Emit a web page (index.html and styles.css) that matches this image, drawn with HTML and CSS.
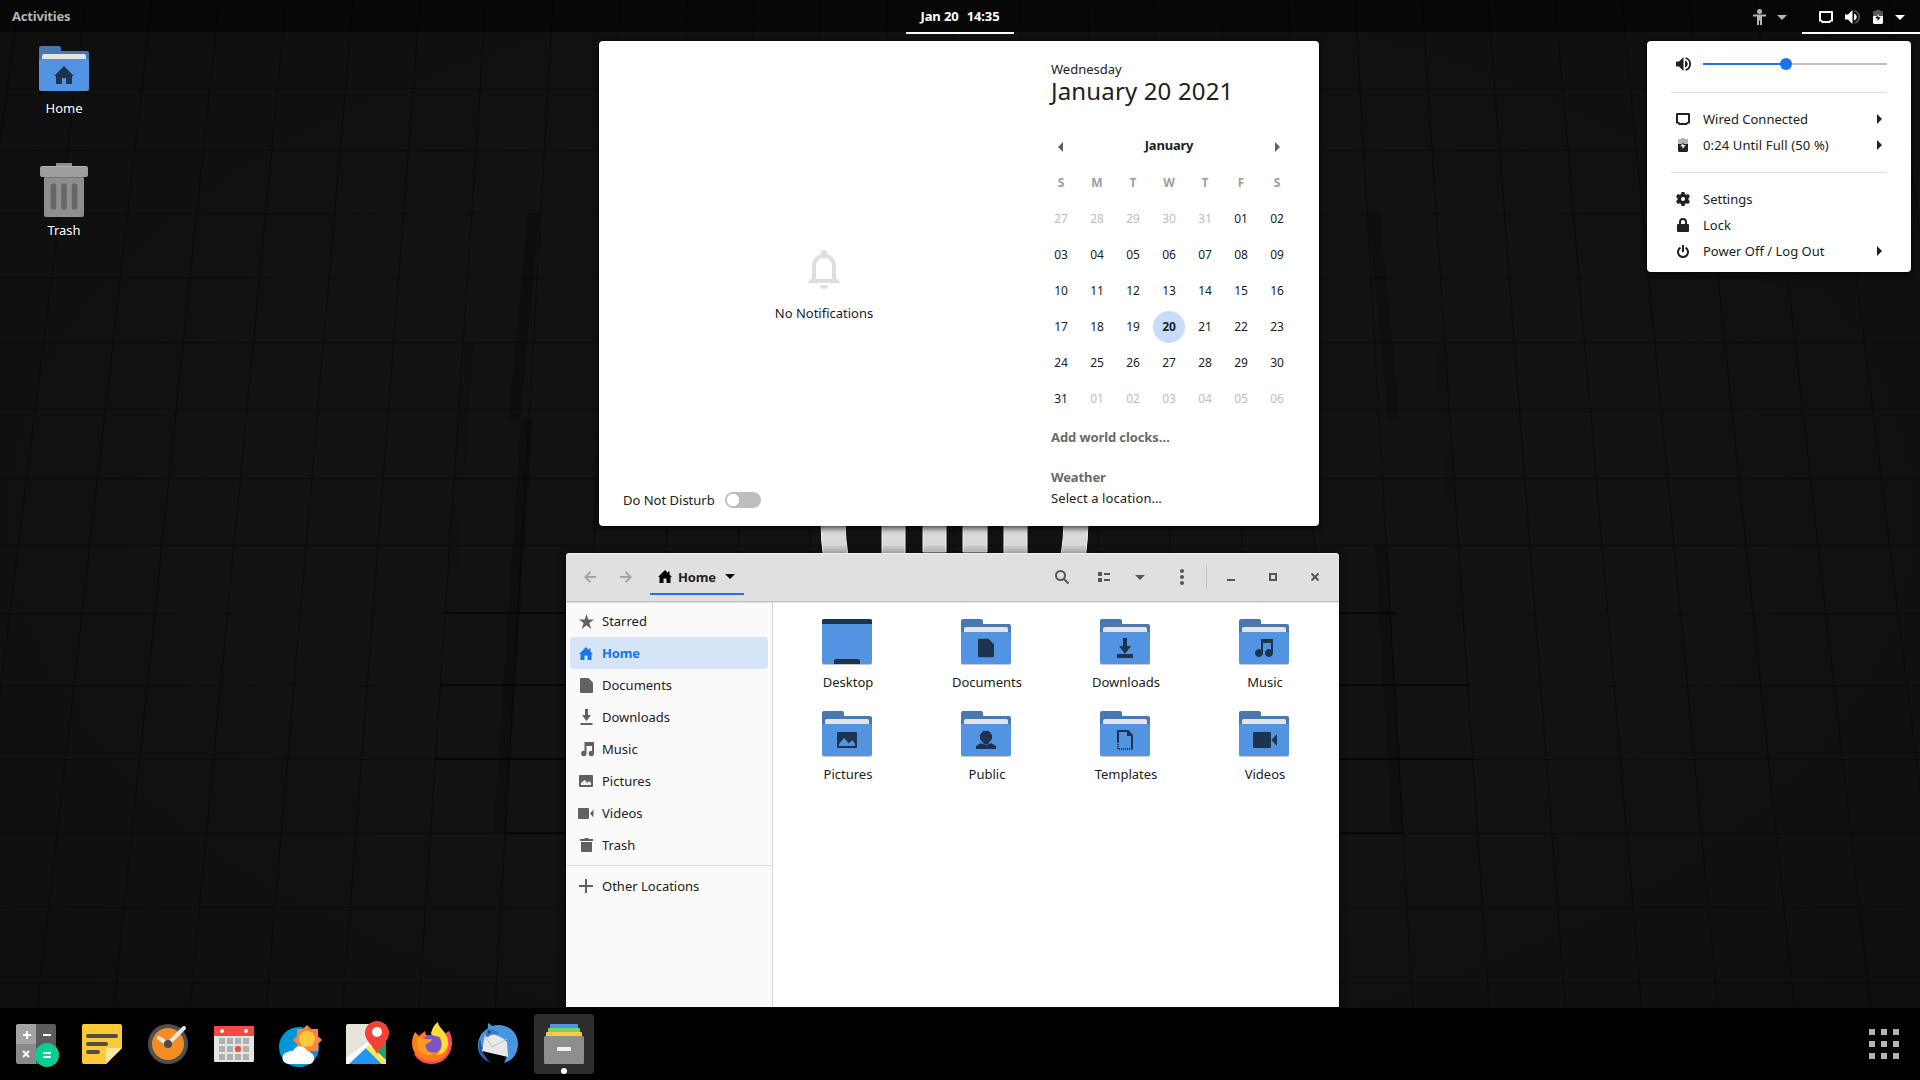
FILE: index.html
```html
<!DOCTYPE html>
<html lang="en">
<head>
<meta charset="utf-8">
<title>Desktop</title>
<link rel="stylesheet" href="styles.css">
</head>
<body>
<svg class="defs" width="0" height="0">
  <symbol id="folder" viewBox="0 0 50 46">
    <path d="M0 4a2 2 0 0 1 2-2h46a2 2 0 0 1 2 2v40a2 2 0 0 1-2 2H2a2 2 0 0 1-2-2z" fill="#000" opacity=".2" transform="translate(0 11) scale(1 .76)"/>
    <path d="M0 2a2 2 0 0 1 2-2h18a2 2 0 0 1 2 2v3h26a2 2 0 0 1 2 2v20H0z" fill="#4877b1"/>
    <path d="M3 10a2 2 0 0 1 2-2h40a2 2 0 0 1 2 2v8H3z" fill="#e4e4e4"/>
    <path d="M0 15a2 2 0 0 1 2-2h46a2 2 0 0 1 2 2v28a2 2 0 0 1-2 2H2a2 2 0 0 1-2-2z" fill="#5294e2"/>
  </symbol>
  <symbol id="house" viewBox="0 0 14 13"><path d="M7 0 0 7h1.500v6H5.500V8.500h3V13h4V7H14L11.500 4.500V1.500h-1.500v1.500z" /></symbol>
  <symbol id="house-plain" viewBox="0 0 20 18"><path d="M10 0 0 10h2v8h6v-6h4v6h6v-8h2z"/></symbol>
  <symbol id="doc" viewBox="0 0 13 15"><path d="M1 0h7.500L13 4.500V14a1 1 0 0 1-1 1H1a1 1 0 0 1-1-1V1a1 1 0 0 1 1-1z"/></symbol>
  <symbol id="down" viewBox="0 0 13 16"><path d="M5 0h3v6h3l-4.500 6L2 6h3zM.500 14h12v2H.500z"/></symbol>
  <symbol id="note" viewBox="0 0 15 15"><path d="M5.500 0H15v11.500a2.700 2.700 0 1 1-2-2.600V4H7.500v7.800A2.700 2.700 0 1 1 5.500 9z"/></symbol>
  <symbol id="pic" viewBox="0 0 20 16"><path fill-rule="evenodd" d="M1 0h18a1 1 0 0 1 1 1v14a1 1 0 0 1-1 1H1a1 1 0 0 1-1-1V1a1 1 0 0 1 1-1zM2 14h16v-2.500L15 8l-3 3.500L7 6l-5 6z"/></symbol>
  <symbol id="cam" viewBox="0 0 16 11"><path d="M1 0h9a1 1 0 0 1 1 1v9a1 1 0 0 1-1 1H1a1 1 0 0 1-1-1V1a1 1 0 0 1 1-1zM12 5.500l3.500-4v8z"/></symbol>
  <symbol id="caret" viewBox="0 0 10 5"><path d="M0 0h10L5 5z"/></symbol>
  <symbol id="tri" viewBox="0 0 5 10"><path d="M0 0v10l5-5z"/></symbol>
  <symbol id="screen" viewBox="0 0 14 12"><path fill-rule="evenodd" d="M1 0h12a1 1 0 0 1 1 1v9.500h-2L11 12H3l-1-1.500H0V1a1 1 0 0 1 1-1zM2 2v7h1l1 1h6l1-1h1V2z"/></symbol>
  <symbol id="battery" viewBox="0 0 10 14"><path d="M3 0h4v1h2.500l.5.500V7H0V1.500L.500 1H3z" opacity=".33"/><path fill-rule="evenodd" d="M0 6h10v7l-1 1H1l-1-1zM5.500 4 2.300 8.300H4.500V11L7.700 7.200H5.500z"/></symbol>
  <symbol id="speaker" viewBox="0 0 16 14"><path d="M0 4.500h3L7.500 0v14L3 9.500H0zM9 3.500c2 .8 2.700 2 2.700 3.500S11 9.700 9 10.500z"/></symbol>
</svg>

<header class="topbar">
  <span class="activities">Activities</span>
  <div class="clock"><span>Jan 20</span><span>14:35</span></div>
  <div class="tray">
    <div class="a11y">
      <svg width="13" height="16"><circle cx="6.500" cy="2.500" r="2.500"/><path d="M0 5.500h13V7.500H9V16H7v-4.500H6V16H4V7.500H0z"/></svg>
      <svg width="10" height="5"><use href="#caret"/></svg>
    </div>
    <div class="status">
      <svg width="14" height="12"><use href="#screen"/></svg>
      <svg width="16" height="14"><use href="#speaker"/><path d="M9.500 1a6.200 6.200 0 0 1 0 12" fill="none" stroke="#fff" stroke-opacity=".33" stroke-width="1.800"/></svg>
      <svg width="10" height="14"><use href="#battery"/></svg>
      <svg width="10" height="5"><use href="#caret"/></svg>
    </div>
  </div>
</header>

<main class="desktop">
  <svg class="wallpaper" width="1920" height="1080" viewBox="0 0 1920 1080">
    <defs>
      <radialGradient id="vig" cx=".5" cy=".48" r=".62"><stop offset="0" stop-color="#121212"/><stop offset=".6" stop-color="#121212"/><stop offset="1" stop-color="#0f0f0f"/></radialGradient>
      <linearGradient id="logo" gradientUnits="userSpaceOnUse" x1="0" y1="520" x2="0" y2="560"><stop offset="0" stop-color="#dedede"/><stop offset=".65" stop-color="#d8d8d8"/><stop offset=".66" stop-color="#cacaca"/><stop offset="1" stop-color="#cacaca"/></linearGradient>
      <linearGradient id="sh" x1="0" x2="1"><stop offset="0" stop-color="#000" stop-opacity="0"/><stop offset="1" stop-color="#000" stop-opacity=".3"/></linearGradient>
      <linearGradient id="shr" x1="1" x2="0"><stop offset="0" stop-color="#000" stop-opacity="0"/><stop offset="1" stop-color="#000" stop-opacity=".22"/></linearGradient>
    </defs>
    <rect width="1920" height="1080" fill="url(#vig)"/>
    <path fill="none" stroke="#0a0a0a" d="M954 0V1080M887 0 877 1080M820 0 800 1080M754 0 723 1080M687 0 646 1080M620 0 568 1080M553 0 491 1080M486 0 414 1080M420 0 337 1080M353 0 260 1080M286 0 183 1080M219 0 106 1080M152 0 29 1080M86 0-48 1080M19 0-125 1080M1021 0 1031 1080M1088 0 1108 1080M1154 0 1185 1080M1221 0 1262 1080M1288 0 1340 1080M1355 0 1417 1080M1422 0 1494 1080M1488 0 1571 1080M1555 0 1648 1080M1622 0 1725 1080M1689 0 1802 1080M1756 0 1879 1080M1822 0 1956 1080M1889 0 2033 1080"/>
    <path stroke="#0b0b0b" d="M0 88.500H1920M0 150.500H1920M0 213.500H1920M0 277.500H1920M0 342.500H1920M0 408.500H1920M0 478.500H1920M0 545.500H1920M0 613.500H1920M0 685.500H1920M0 759.500H1920M0 833.500H1920M0 907.500H1920M0 983.500H1920"/>
    <path fill="url(#sh)" d="M528 213h12l-20 207h-12zM464 342h10l-29 417h-10zM521 420h12l-28 413h-12z"/>
    <path fill="url(#shr)" d="M1368 213h12l20 207h-12zM1434 342h10l31 417h-10zM1375 545h12l17 288h-12z"/>
    <path stroke="#000" stroke-opacity=".5" stroke-width="2" d="M505 833H1402M435 759H1475M440 685H1470M446 613H1395"/>
    <g fill="url(#logo)" stroke="#f2f2f2" stroke-width="1">
      <path d="M821 520h24q0 18 3.500 40H824q-3-18-3-40zM882 520h23v40h-23zM923 520h23v32h-23zM963 520h24v32h-24zM1004 520h23v40h-23zM1064 520h24q0 18-3 40h-24.500q3.500-22 3.500-40z"/>
    </g>
  </svg>

  <div class="shortcut home-shortcut">
    <svg width="50" height="46"><use href="#folder"/><use href="#house-plain" x="15" y="20" width="20" height="18" fill="#1d344f"/></svg>
    <span>Home</span>
  </div>
  <div class="shortcut trash-shortcut">
    <svg width="48" height="54"><path d="M16 0h16v4H16z" fill="#8e8e8e"/><path d="M4 10h40v42a2 2 0 0 1-2 2H6a2 2 0 0 1-2-2z" fill="#8e8e8e"/><path d="M4 13h40v2H4z" fill="#737373"/><rect y="3" width="48" height="11" rx="2" fill="#9e9e9e"/><path d="M2 3.500h44" stroke="#b5b5b5"/><path d="M13.500 23v21M24 23v21M34.500 23v21" stroke="#666" stroke-width="5.500" stroke-linecap="round"/></svg>
    <span>Trash</span>
  </div>

  <section class="window">
    <div class="headerbar">
      <div class="nav">
        <svg width="12" height="12"><path d="M12 6H1.500M6.500.800 1.300 6l5.200 5.200"/></svg>
        <svg width="12" height="12"><path d="M0 6h10.500M5.500.800 10.700 6l-5.200 5.200"/></svg>
      </div>
      <div class="crumb">
        <svg width="14" height="13"><use href="#house"/></svg>
        <span>Home</span>
        <svg width="10" height="5"><use href="#caret"/></svg>
      </div>
      <div class="tools">
        <svg class="t-search" width="14" height="14"><circle cx="5.500" cy="5.500" r="4.500" fill="none" stroke="#555" stroke-width="2"/><path d="m8.500 8.500 5 5" stroke="#555" stroke-width="2"/></svg>
        <svg class="t-list" width="12" height="10"><path d="M0 0h4v4H0zM0 6h4v4H0zM6 1h6v2H6zM6 7h6v2H6z"/></svg>
        <svg class="t-caret" width="10" height="5"><use href="#caret"/></svg>
        <svg class="t-dots" width="4" height="16"><circle cx="2" cy="2" r="2"/><circle cx="2" cy="8" r="2"/><circle cx="2" cy="14" r="2"/></svg>
        <i class="t-sep"></i>
        <svg width="8" height="8"><path d="M0 6h8v2H0z"/></svg>
        <svg width="8" height="8"><path fill-rule="evenodd" d="M0 0h8v8H0zM2 2v4h4V2z"/></svg>
        <svg width="8" height="8"><path d="m.5.500 7 7m0-7-7 7" stroke="#555" stroke-width="2"/></svg>
      </div>
    </div>
    <div class="content">
      <nav class="sidebar">
        <div class="place"><svg width="15" height="15"><path d="M7.500 0 9.300 5.500H15l-4.600 3.400L12.200 15 7.500 11.200 2.800 15l1.800-6.100L0 5.500h5.700z"/></svg>Starred</div>
        <div class="place active"><svg width="14" height="13"><use href="#house"/></svg>Home</div>
        <div class="place"><svg width="13" height="15"><use href="#doc"/></svg>Documents</div>
        <div class="place"><svg width="13" height="16"><use href="#down"/></svg>Downloads</div>
        <div class="place"><svg width="15" height="15"><use href="#note"/></svg>Music</div>
        <div class="place"><svg width="14" height="12" viewBox="0 0 14 12"><path fill-rule="evenodd" d="M1 0h12a1 1 0 0 1 1 1v10a1 1 0 0 1-1 1H1a1 1 0 0 1-1-1V1a1 1 0 0 1 1-1zM2 10h10V8l-2-2-1.500 2L5.500 5 2 8z"/></svg>Pictures</div>
        <div class="place"><svg width="16" height="11"><use href="#cam"/></svg>Videos</div>
        <div class="place"><svg width="13" height="14"><path d="M0 1h4l1-1h3l1 1h4v2H0zM1 4h11v9a1 1 0 0 1-1 1H2a1 1 0 0 1-1-1z"/></svg>Trash</div>
        <hr>
        <div class="place"><svg width="14" height="14"><path d="M6 0h2v6h6v2H8v6H6V8H0V6h6z"/></svg>Other Locations</div>
      </nav>
      <div class="files">
        <div class="file"><svg width="50" height="46"><rect y="1" width="50" height="45" rx="2" fill="#c4c4c4"/><rect width="50" height="45" rx="2" fill="#5294e2"/><path d="M0 5V2a2 2 0 0 1 2-2h46a2 2 0 0 1 2 2v3zM12 45v-3a2 2 0 0 1 2-2h22a2 2 0 0 1 2 2v3z" fill="#1d344f"/></svg><span>Desktop</span></div>
        <div class="file"><svg width="50" height="46"><use href="#folder"/><use href="#doc" x="17" y="19" width="16" height="20"/></svg><span>Documents</span></div>
        <div class="file"><svg width="50" height="46"><use href="#folder"/><path d="M23 19h4v8h4l-6 8-6-8h4zM17 35h16v4H17z"/></svg><span>Downloads</span></div>
        <div class="file"><svg width="50" height="46"><use href="#folder"/><path d="M22 20h12v14a4 4 0 1 1-2-3.500V24h-8v10a4 4 0 1 1-2-3.500z"/></svg><span>Music</span></div>
        <div class="file"><svg width="50" height="46"><use href="#folder"/><use href="#pic" x="15" y="21" width="20" height="16"/></svg><span>Pictures</span></div>
        <div class="file"><svg width="50" height="46"><use href="#folder"/><path d="M22 20h6l3 4v4l-4 5h-4l-4-5v-4zM15 38v-3l5-3q5 3 10 0l5 3v3z"/></svg><span>Public</span></div>
        <div class="file"><svg width="50" height="46"><use href="#folder"/><path fill="none" stroke="#1d344f" stroke-width="2" d="M18 31V20h10l4 4.500V38"/><path d="M27 19l6 6h-6z"/><path fill="none" stroke="#1d344f" stroke-width="2" stroke-dasharray="1 1" d="M18 31v7h14"/></svg><span>Templates</span></div>
        <div class="file"><svg width="50" height="46"><use href="#folder"/><path d="M15 21h16a1 1 0 0 1 1 1v14a1 1 0 0 1-1 1H15a1 1 0 0 1-1-1V22a1 1 0 0 1 1-1zM38 23v12l-5.500-6z"/></svg><span>Videos</span></div>
      </div>
    </div>
  </section>

  <section class="popup date-menu">
    <div class="messages">
      <div class="empty">
        <svg width="32" height="39"><path d="M16 0a3 3 0 0 1 3 4.200A12 12 0 0 1 28 16v12l4 4v1H0v-1l4-4V16a12 12 0 0 1 9-11.800A3 3 0 0 1 16 0zM8 29h16V16a8 8 0 0 0-16 0zM12 35h8a4 4 0 0 1-8 0z" fill-rule="evenodd"/></svg>
        <span>No Notifications</span>
      </div>
      <div class="dnd"><span>Do Not Disturb</span><i class="switch"></i></div>
    </div>
    <div class="calendar">
      <div class="weekday">Wednesday</div>
      <div class="today">January 20 2021</div>
      <div class="month"><svg class="prev" width="5" height="10"><use href="#tri"/></svg><b>January</b><svg width="5" height="10"><use href="#tri"/></svg></div>
      <div class="days">
        <b>S</b><b>M</b><b>T</b><b>W</b><b>T</b><b>F</b><b>S</b>
        <i>27</i><i>28</i><i>29</i><i>30</i><i>31</i><span>01</span><span>02</span>
        <span>03</span><span>04</span><span>05</span><span>06</span><span>07</span><span>08</span><span>09</span>
        <span>10</span><span>11</span><span>12</span><span>13</span><span>14</span><span>15</span><span>16</span>
        <span>17</span><span>18</span><span>19</span><span class="current">20</span><span>21</span><span>22</span><span>23</span>
        <span>24</span><span>25</span><span>26</span><span>27</span><span>28</span><span>29</span><span>30</span>
        <span>31</span><i>01</i><i>02</i><i>03</i><i>04</i><i>05</i><i>06</i>
      </div>
      <div class="clocks">Add world clocks…</div>
      <div class="weather">Weather</div>
      <div class="location">Select a location…</div>
    </div>
  </section>

  <section class="popup system-menu">
    <div class="volume">
      <svg width="16" height="14"><use href="#speaker"/><path d="M9.500 1a6.200 6.200 0 0 1 0 12" fill="none" stroke="#212121" stroke-width="1.800"/></svg>
      <div class="track"><div class="fill" style="width:45%"></div></div>
    </div>
    <hr>
    <div class="row"><svg width="14" height="12"><use href="#screen"/></svg><span>Wired Connected</span><svg width="5" height="10"><use href="#tri"/></svg></div>
    <div class="row"><svg width="10" height="14"><use href="#battery"/></svg><span class="charge">0:24 Until Full (50 %)</span><svg width="5" height="10"><use href="#tri"/></svg></div>
    <hr>
    <div class="row"><svg width="14" height="14"><path fill-rule="evenodd" d="M5.500 0h3l.4 2 1.400.8 2-.8 1.700 2.700L12.500 6v2l1.500 1.300-1.700 2.700-2-.8-1.400.8-.4 2h-3l-.4-2-1.400-.8-2 .8L0 9.300 1.500 8V6L0 4.700 1.700 2l2 .8L5.100 2zM7 5a2 2 0 1 0 0 4 2 2 0 0 0 0-4z"/></svg><span>Settings</span></div>
    <div class="row"><svg width="12" height="14"><path d="M1 6h10a1 1 0 0 1 1 1v6a1 1 0 0 1-1 1H1a1 1 0 0 1-1-1V7a1 1 0 0 1 1-1z"/><path d="M3 7V4a3 3 0 0 1 6 0v3" fill="none" stroke="#212121" stroke-width="2"/></svg><span>Lock</span></div>
    <div class="row"><svg width="12" height="13"><path d="M3.500 2.700A5 5 0 1 0 8.500 2.700M6 0v7" fill="none" stroke="#212121" stroke-width="2"/></svg><span>Power Off / Log Out</span><svg width="5" height="10"><use href="#tri"/></svg></div>
  </section>
</main>

<footer class="dock">
  <div class="apps">
    <div class="app"><svg viewBox="0 0 60 60"><path d="M10 12a2 2 0 0 1 2-2h18v20H10z" fill="#a3a3a3"/><path d="M30 10h18a2 2 0 0 1 2 2v18H30z" fill="#5c5c5c"/><path d="M10 30h20v20H12a2 2 0 0 1-2-2z" fill="#8a8a8a"/><path d="M30 30h20v20H30z" fill="#555"/><circle cx="41" cy="41" r="12" fill="#08cf91"/><path d="M17 21h8M21 17v8M37 21h8M17 37l6 6M23 37l-6 6M37 39h8M37 43h8" stroke="#fff" stroke-width="2"/></svg></div>
    <div class="app"><svg viewBox="0 0 60 60"><path d="M12 10h36a2 2 0 0 1 2 2v22L34 50H12a2 2 0 0 1-2-2V12a2 2 0 0 1 2-2z" fill="#ffca36"/><path d="M34 34h16L34 50z" fill="#ffe7a0"/><path d="M16 22h28M16 30h18M16 38h10" stroke="#504d46" stroke-width="4" stroke-linecap="round"/></svg></div>
    <div class="app"><svg viewBox="0 0 60 60"><circle cx="30" cy="30" r="20" fill="#4f4f4f"/><circle cx="30" cy="30" r="16" fill="#f28d26"/><path d="M21 24l9 6L46 14" fill="none" stroke="#e8e8e8" stroke-width="4" stroke-linecap="round"/><circle cx="30" cy="30" r="4" fill="#4a4a4a"/></svg></div>
    <div class="app"><svg viewBox="0 0 60 60"><rect x="10" y="12" width="40" height="36" rx="1.500" fill="#e4e4e4"/><path d="M10 22v-9a1 1 0 0 1 1-1h38a1 1 0 0 1 1 1v9z" fill="#f44b3e"/><circle cx="18" cy="17" r="2" fill="#fff"/><circle cx="42" cy="17" r="2" fill="#fff"/><path d="M15 27h30M15 35h30M15 43h30" stroke="#b0b0b0" stroke-width="6" stroke-dasharray="6 2"/><circle cx="34" cy="35" r="3" fill="#f44b3e"/></svg></div>
    <div class="app"><svg viewBox="0 0 60 60"><circle cx="29" cy="33" r="20" fill="#0296d6"/><path d="m37 11 4 4h7v7l4 4-4 4v7h-7l-4 3-4-3h-6v-7l-4-4 4-4v-7h6z" fill="#ff8441"/><circle cx="37" cy="25" r="8" fill="#ffc83c"/><path d="M19 50a6 6 0 0 1-1-12 6 6 0 0 1 5-1 7.500 7.500 0 0 1 14 0 6 6 0 0 1 4 2 6 6 0 0 1-1 11z" fill="#fff"/></svg></div>
    <div class="app"><svg viewBox="0 0 60 60"><rect x="10" y="10" width="40" height="40" rx="2" fill="#e9e4db"/><path d="M10 44 32 28 50 46v4H10z" fill="#fff"/><path d="M13 50l17-16 16 16z" fill="#2196f3"/><path d="M50 24v22L36 33z" fill="#21a35f"/><path d="M32 31l18 16v3h-4L30 34z" fill="#ffeb3b"/><path d="M41 7a12 12 0 0 1 12 12c0 8-7 11-12 21-5-10-12-13-12-21A12 12 0 0 1 41 7z" fill="#f44336"/><circle cx="41" cy="18" r="5" fill="#fff"/></svg></div>
    <div class="app"><svg viewBox="0 0 60 60"><path d="M47 17c4 6 4 17 0 23-4 7-11 10-18 10s-14-4-17-10z" fill="#fb4762"/><path d="M13 18l4 4 6-5 1 4 12 2v-5l8 4c4 7 3 16-1 20-7 7-18 7-25 2-9-6-10-17-5-26z" fill="#ff7c1e"/><circle cx="30" cy="30" r="9.500" fill="#7a55c7"/><path d="M36 8c0 6 9 9 10 19 1 8-5 14-12 14 5-3 8-10 4-18-3-1-7-1-9-3 1-6 4-10 7-12z" fill="#ffdc38"/><path d="M15 24c4-1 7 2 15 1-1 4-4 4-6 5-2 6 4 10 10 8-6 6-17 3-19-5z" fill="#ff9a23"/></svg></div>
    <div class="app"><svg viewBox="0 0 60 60"><path d="M20 9c2 1 3 2 4 3 12-4 26 4 26 18 0 10-6 17-14 19l3-7-25-9-1 5c3 5 6 8 9 10C9 44 7 29 14 19l6-5z" fill="#4a95df"/><path d="M12 25c-3 10 0 18 9 23l-6-10z" fill="#25599f"/><path d="M17 20q14-1 22 8l1 15-26-6z" fill="#e8e8e8"/><path d="M17 22l7 11 15-8" fill="none" stroke="#bdbdbd"/><path d="M17 22l3-7q7 0 12 5-7-1-12 3z" fill="#3579c7"/><circle cx="21" cy="18" r="1.200" fill="#112c50"/></svg></div>
    <div class="app running"><svg viewBox="0 0 60 60"><rect x="16" y="10" width="28" height="8" rx="1" fill="#5294e2"/><rect x="14" y="14" width="32" height="8" rx="1" fill="#7ad45c"/><rect x="12" y="18" width="36" height="8" rx="1" fill="#ffc648"/><rect x="10" y="22" width="40" height="28" rx="1.500" fill="#8e8e8e"/><rect x="23" y="33" width="14" height="4" rx="1" fill="#f2f2f2"/><circle cx="30" cy="57" r="3" fill="#fff"/></svg></div>
  </div>
  <svg class="all-apps" width="30" height="30"><path d="M0 0h6v6H0zM12 0h6v6h-6zM24 0h6v6h-6zM0 12h6v6H0zM12 12h6v6h-6zM24 12h6v6h-6zM0 24h6v6H0zM12 24h6v6h-6zM24 24h6v6h-6z"/></svg>
</footer>
</body>
</html>
```
FILE: styles.css
```css
* { box-sizing: border-box; }
body {
  margin: 0;
  width: 1920px;
  height: 1080px;
  overflow: hidden;
  display: flex;
  flex-direction: column;
  background: #000;
  color: #212121;
  font: 13px/20px "Noto Sans", "Open Sans", sans-serif;
}
svg { display: block; flex: none; }
.defs { position: absolute; }
hr { border: 0; margin: 0; height: 1px; background: #dcdcdc; }

/* top panel */
.topbar {
  position: relative;
  z-index: 1;
  height: 32px;
  flex: none;
  display: grid;
  grid-template-columns: 906px 108px 1fr;
  background: rgba(0, 0, 0, .6);
  color: #fff;
  font-weight: 700;
  line-height: 32px;
}
.activities { padding-left: 12px; color: #b5b5b5; letter-spacing: -.2px; }
.clock {
  display: flex;
  justify-content: center;
  gap: 8px;
  border-bottom: 2px solid #fff;
  letter-spacing: -.1px;
}
.tray { display: flex; justify-content: flex-end; }
.a11y { display: flex; align-items: center; gap: 11px; padding-right: 15px; fill: #b5b5b5; }
.status {
  width: 118px;
  display: flex;
  align-items: center;
  gap: 12px;
  padding: 2px 15px 0 17px;
  border-bottom: 2px solid #fff;
  fill: #fff;
}

/* desktop */
.desktop { position: relative; height: 976px; flex: none; }
.wallpaper { position: absolute; left: 0; top: -32px; }
.shortcut {
  position: absolute;
  width: 100px;
  left: 14px;
  display: flex;
  flex-direction: column;
  align-items: center;
  color: #fff;
  text-shadow: 0 1px 2px #000;
}
.home-shortcut { top: 14px; gap: 6px; }
.trash-shortcut { top: 131px; gap: 3px; }

/* file manager */
.window {
  position: absolute;
  left: 566px;
  top: 521px;
  width: 773px;
  height: 454px;
  display: flex;
  flex-direction: column;
  background: #fff;
  border-radius: 4px 4px 0 0;
  box-shadow: 0 2px 8px rgba(0, 0, 0, .7);
}
.headerbar {
  position: relative;
  height: 49px;
  flex: none;
  display: flex;
  align-items: stretch;
  background: #e0e0e0;
  border-radius: 4px 4px 0 0;
  border-bottom: 1px solid #bdbdbd;
  box-shadow: inset 0 1px #f0f0f0, 0 1px 1px rgba(0, 0, 0, .1);
}
.nav {
  display: flex;
  align-items: center;
  gap: 24px;
  padding-left: 18px;
  margin-right: 18px;
  fill: none;
  stroke: #a5a5a5;
  stroke-width: 2;
}
.crumb {
  width: 94px;
  height: 42px;
  display: flex;
  align-items: center;
  gap: 6px;
  padding: 7px 9px 0 8px;
  border-bottom: 2px solid #1a73e8;
  font-weight: 700;
  letter-spacing: -.2px;
}
.crumb svg:last-child { margin-left: auto; }
.tools { margin-left: auto; display: flex; align-items: center; padding-right: 20px; fill: #555; }
.t-search { margin-right: 29px; }
.t-list { margin-right: 25px; }
.t-caret { margin-right: 35px; }
.t-dots { margin-right: 22px; }
.t-sep { width: 1px; height: 24px; background: #c2c2c2; margin-right: 20px; }
.t-sep ~ svg + svg { margin-left: 34px; }
.content { flex: 1; display: flex; min-height: 0; }
.sidebar {
  width: 207px;
  background: #fafafa;
  border-right: 1px solid #d6d6d6;
  padding-top: 3px;
}
.place {
  height: 32px;
  margin: 0 4px;
  display: grid;
  grid-template-columns: 16px 1fr;
  align-items: center;
  gap: 8px;
  padding-left: 8px;
  border-radius: 4px;
  fill: #616161;
}
.place svg { justify-self: center; }
.place.active { background: #d6e4f8; color: #1a73e8; fill: #1a73e8; font-weight: 700; letter-spacing: -.2px; }
.sidebar hr { margin: 4px 0; }
.files {
  flex: 1;
  display: grid;
  grid-template-columns: repeat(4, 139px);
  grid-auto-rows: 92px;
  padding: 17px 0 0 5px;
}
.file { display: flex; flex-direction: column; align-items: center; gap: 7px; fill: #1d344f; }
.file svg { margin-right: 2px; }
.file span { padding-left: 1px; }

/* shell popups */
.popup {
  position: absolute;
  top: 9px;
  background: #fff;
  border-radius: 4px;
  box-shadow: 0 2px 6px rgba(0, 0, 0, .8);
}
.date-menu { left: 599px; width: 720px; height: 485px; display: flex; }
.messages { width: 450px; display: flex; flex-direction: column; padding-bottom: 16px; }
.empty {
  flex: 1;
  padding-top: 209px;
  display: flex;
  flex-direction: column;
  align-items: center;
  gap: 14px;
  fill: #dedede;
}
.dnd { display: flex; align-items: center; gap: 10px; padding-left: 24px; }
.switch {
  width: 36px;
  height: 16px;
  border-radius: 8px;
  background: radial-gradient(circle at 8px 8px, #fff 6px, transparent 6.5px) #bdbdbd;
}
.calendar { padding: 18px 24px 0 2px; width: 258px; }
.today { font-size: 24px; line-height: 24px; letter-spacing: .15px; white-space: nowrap; }
.month {
  height: 36px;
  margin-top: 26px;
  padding: 0 8px 0 7px;
  display: flex;
  justify-content: space-between;
  align-items: center;
  width: 237px;
  fill: #616161;
}
.month b { position: relative; top: -2px; letter-spacing: -.2px; }
.prev { transform: scaleX(-1); }
.days {
  display: grid;
  grid-template-columns: repeat(7, 32px);
  grid-auto-rows: 32px;
  gap: 4px;
  margin: 2px 0 0 -6px;
  text-align: center;
  font-size: 12px;
  line-height: 32px;
}
.days b { color: #9e9e9e; }
.days i { color: #bdbdbd; font-style: normal; }
.current { border-radius: 50%; background: #c6dcfa; font-weight: 700; }
.clocks, .weather { color: #6a6a6a; font-weight: 700; letter-spacing: -.1px; }
.clocks { margin-top: 12px; }
.weather { margin-top: 20px; }
.location { margin-top: 1px; letter-spacing: .1px; }
.system-menu { left: 1647px; width: 264px; height: 231px; padding-top: 9px; }
.system-menu hr { margin: 0 24px; }
.volume { display: flex; align-items: center; gap: 11px; height: 27px; padding: 0 24px 0 29px; }
.track { flex: 1; height: 2px; background: #bdbdbd; }
.fill { position: relative; height: 2px; background: #1a73e8; }
.fill::after {
  content: "";
  position: absolute;
  right: -6px;
  top: -5px;
  width: 12px;
  height: 12px;
  border-radius: 50%;
  background: #1a73e8;
}
.volume + hr { margin: 15px 24px 13px; }
.row + hr { margin: 14px 24px 13px; }
.row {
  height: 26px;
  display: grid;
  grid-template-columns: 16px 1fr 5px;
  align-items: center;
  gap: 12px;
  padding: 0 29px 0 28px;
}
.row svg:first-child { justify-self: center; }
.charge { letter-spacing: .12px; }
.system-menu { fill: #212121; }

/* dock */
.dock {
  position: relative;
  z-index: 1;
  height: 72px;
  flex: none;
  background: #000;
  display: flex;
  justify-content: space-between;
  align-items: center;
  padding: 0 21px 0 6px;
}
.apps { display: flex; gap: 6px; }
.app { width: 60px; height: 60px; border-radius: 4px; }
.running { background: #2e2e2e; }
.all-apps { fill: #b5b5b5; }
```
